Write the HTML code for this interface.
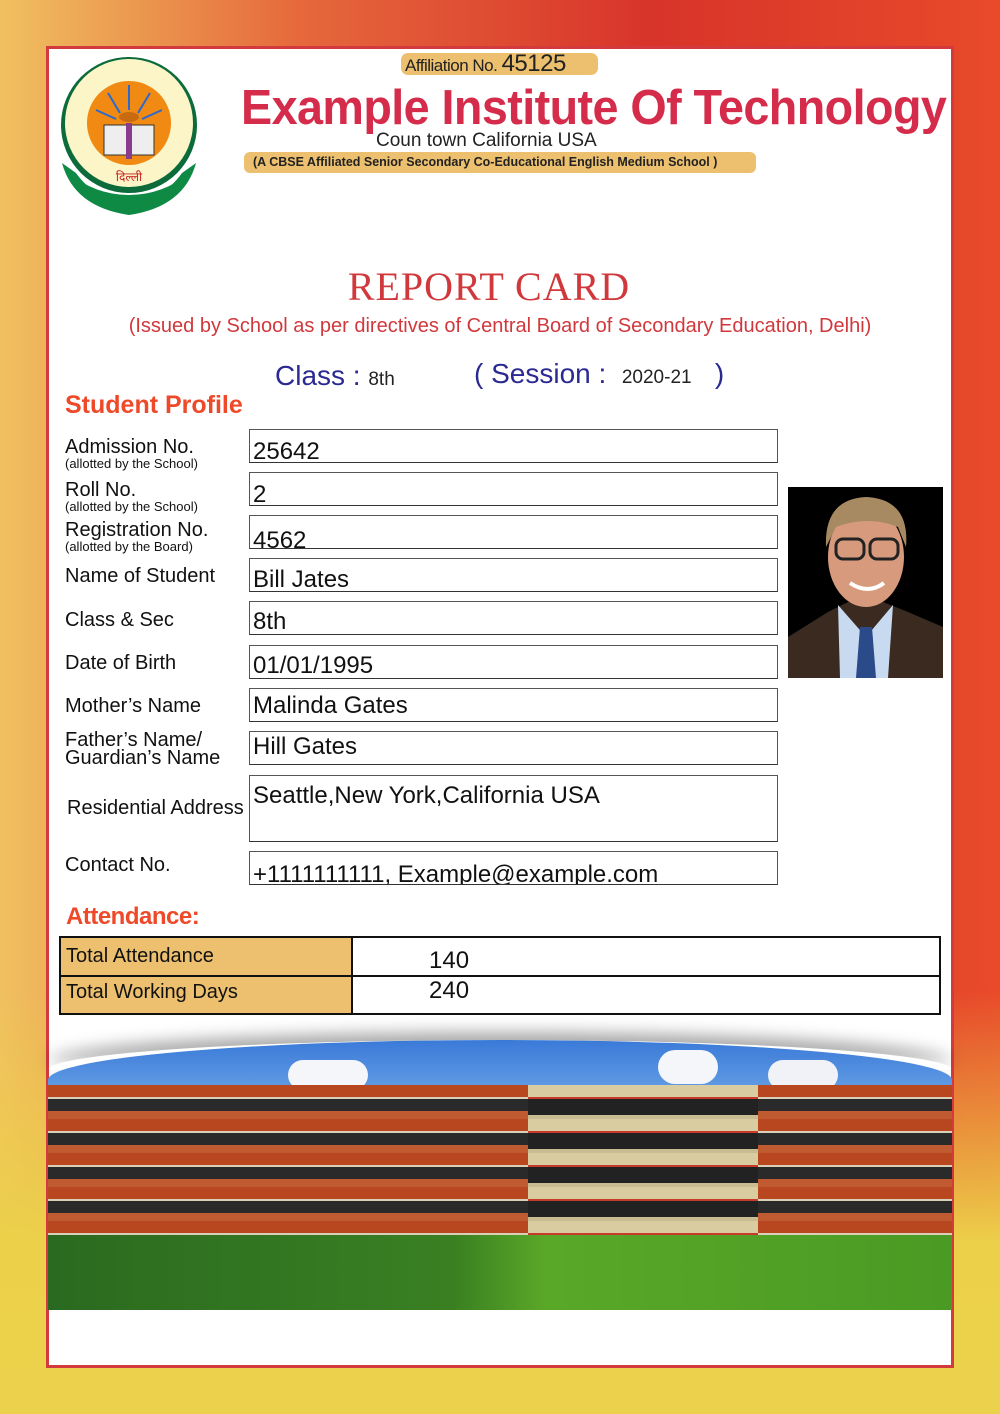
<!DOCTYPE html>
<html><head><meta charset="utf-8">
<style>
*{margin:0;padding:0;box-sizing:border-box}
body{width:1000px;height:1414px;position:relative;overflow:hidden;font-family:"Liberation Sans",sans-serif;
background:linear-gradient(180deg,rgba(0,0,0,0) 0%,rgba(0,0,0,0) 70%,rgba(236,208,74,1) 88%,#ecd24c 100%),
linear-gradient(90deg,#f0c060 0%,#e6683c 30%,#d8342a 65%,#e84a2a 100%);}
.a{position:absolute}
#card{left:46px;top:46px;width:908px;height:1322px;background:#fff;border:3px solid #d23a3e}
.lbl{position:absolute;left:65px;font-size:20px;color:#111}
.sm{font-size:13px;display:block;line-height:12px}
.box{position:absolute;left:249px;width:529px;height:34px;border:1px solid #555;border-bottom-color:#333;font-size:24px;color:#111;padding-left:3px;line-height:44px;overflow:hidden;white-space:nowrap}
</style></head><body>
<div id="card" class="a"></div>

<!-- emblem -->
<svg class="a" style="left:58px;top:55px" width="142" height="162" viewBox="0 0 142 162">
<path d="M4 108 Q16 152 71 160 Q126 152 138 108 L124 118 Q104 146 71 146 Q38 146 18 118Z" fill="#0e8a45"/>
<ellipse cx="71" cy="70" rx="68" ry="68" fill="#0b6b3a"/>
<ellipse cx="71" cy="68" rx="64" ry="64" fill="#fbf5c8"/>
<path d="M10 118 Q24 150 71 156 Q118 150 132 118 Q104 140 71 140 Q38 140 10 118Z" fill="#0e8a45"/>
<circle cx="71" cy="68" r="42" fill="#f08a12"/>
<g stroke="#2a6ad0" stroke-width="2">
<line x1="71" y1="30" x2="71" y2="55"/><line x1="50" y1="38" x2="62" y2="58"/><line x1="92" y1="38" x2="80" y2="58"/><line x1="38" y1="55" x2="58" y2="64"/><line x1="104" y1="55" x2="84" y2="64"/></g>
<ellipse cx="71" cy="62" rx="10" ry="5" fill="#c86a10"/>
<path d="M46 70 L96 70 L96 100 L46 100Z" fill="#eee" stroke="#333"/>
<rect x="68" y="68" width="6" height="36" fill="#8a3c8c"/>
<text x="71" y="126" font-size="12" text-anchor="middle" fill="#c82020" font-family="Noto Sans CJK SC,sans-serif">दिल्ली</text>
</svg>

<div class="a" style="left:401px;top:53px;width:197px;height:22px;background:#ecc06e;border-radius:7px;font-size:17px;line-height:22px;padding-left:4px;color:#222;letter-spacing:-0.5px">Affiliation No. <span style="font-size:24px">45125</span></div>
<div class="a" style="left:241px;top:80px;font-size:49px;font-weight:bold;color:#d42c4a;letter-spacing:-0.6px;white-space:nowrap;transform:scaleX(0.953);transform-origin:0 0">Example Institute Of Technology</div>
<div class="a" style="left:376px;top:130px;font-size:19px;color:#222">Coun town California USA</div>
<div class="a" style="left:244px;top:152px;width:512px;height:21px;background:#ecc06e;border-radius:6px;font-size:12.5px;font-weight:bold;line-height:21px;padding-left:9px;color:#222;white-space:nowrap">(A CBSE Affiliated Senior Secondary Co-Educational English Medium School )</div>

<div class="a" style="left:0;width:978px;top:263px;text-align:center;font-family:'Liberation Serif',serif;font-size:40px;color:#d0383c;letter-spacing:1px">REPORT CARD</div>
<div class="a" style="left:0;width:1000px;top:315px;text-align:center;font-size:20px;color:#d0383c">(Issued by School as per directives of Central Board of Secondary Education, Delhi)</div>

<div class="a" style="left:275px;top:360px;font-size:28px;color:#2a2a90">Class : <span style="font-size:19px;color:#222">8th</span></div>
<div class="a" style="left:474px;top:358px;font-size:28px;color:#2a2a90;white-space:nowrap">( Session : &nbsp;<span style="font-size:19px;color:#222">2020-21</span> &nbsp;&nbsp;)</div>

<div class="a" style="left:65px;top:391px;font-size:25px;font-weight:bold;color:#ee4a2a">Student Profile</div>

<div class="lbl" style="top:436px;line-height:22px">Admission No.<span class="sm">(allotted by the School)</span></div>
<div class="lbl" style="top:479px;line-height:22px">Roll No.<span class="sm">(allotted by the School)</span></div>
<div class="lbl" style="top:519px;line-height:22px">Registration No.<span class="sm">(allotted by the Board)</span></div>
<div class="lbl" style="top:565px">Name of Student</div>
<div class="lbl" style="top:609px">Class &amp; Sec</div>
<div class="lbl" style="top:652px">Date of Birth</div>
<div class="lbl" style="top:695px">Mother’s Name</div>
<div class="lbl" style="top:731px;line-height:18px">Father’s Name/<br>Guardian’s Name</div>
<div class="lbl" style="top:797px;left:67px">Residential Address</div>
<div class="lbl" style="top:854px">Contact No.</div>

<div class="box" style="top:429px">25642</div>
<div class="box" style="top:472px;line-height:44px">2</div>
<div class="box" style="top:515px;line-height:50px">4562</div>
<div class="box" style="top:558px;line-height:42px">Bill Jates</div>
<div class="box" style="top:601px;line-height:40px">8th</div>
<div class="box" style="top:645px;line-height:40px">01/01/1995</div>
<div class="box" style="top:688px;line-height:34px">Malinda Gates</div>
<div class="box" style="top:731px;line-height:30px">Hill Gates</div>
<div class="box" style="top:775px;height:67px;line-height:40px">Seattle,New York,California USA</div>
<div class="box" style="top:851px;line-height:46px">+1111111111, Example@example.com</div>

<!-- photo -->
<svg class="a" style="left:788px;top:487px" width="155" height="191" viewBox="0 0 155 191">
<rect width="155" height="191" fill="#000"/>
<path d="M0 150 L40 125 L60 115 L95 115 L120 125 L155 140 L155 191 L0 191Z" fill="#3a2a20"/>
<path d="M50 118 L78 150 L105 118 L100 191 L52 191Z" fill="#c8daf0"/>
<path d="M72 140 L84 140 L88 191 L68 191Z" fill="#2a4a8a"/>
<ellipse cx="78" cy="70" rx="38" ry="50" fill="#d89a7c"/>
<path d="M38 60 Q36 12 78 10 Q122 12 118 60 L110 40 Q80 28 48 40Z" fill="#a88a62"/>
<g fill="none" stroke="#222" stroke-width="3"><rect x="48" y="52" width="28" height="20" rx="7"/><rect x="82" y="52" width="28" height="20" rx="7"/></g>
<path d="M62 96 Q80 108 96 96" stroke="#fff" stroke-width="4" fill="none"/>
</svg>

<div class="a" style="left:66px;top:903px;font-size:24px;font-weight:bold;color:#ee4a2a;letter-spacing:-0.5px">Attendance:</div>
<div class="a" style="left:59px;top:936px;width:882px;height:79px;border:2px solid #111;background:#fff"></div>
<div class="a" style="left:61px;top:938px;width:292px;height:75px;background:#ecc06e;border-right:2px solid #111"></div>
<div class="a" style="left:61px;top:975px;width:878px;height:2px;background:#111"></div>
<div class="a" style="left:66px;top:945px;font-size:20px;color:#111">Total Attendance</div>
<div class="a" style="left:66px;top:981px;font-size:20px;color:#111">Total Working Days</div>
<div class="a" style="left:429px;top:947px;font-size:24px;color:#111">140</div>
<div class="a" style="left:429px;top:977px;font-size:24px;color:#111">240</div>

<!-- building picture -->
<div class="a" style="left:48px;top:1040px;width:904px;height:30px;border-radius:50% 50% 0 0/100% 100% 0 0;box-shadow:0 -8px 16px rgba(0,0,0,0.35)"></div>
<div class="a" style="left:48px;top:1040px;width:904px;height:270px;overflow:hidden;border-radius:50% 50% 0 0/40px 40px 0 0">
<div class="a" style="left:0;top:0;width:904px;height:80px;background:linear-gradient(180deg,#3a7ad8,#7ab0ec)"></div>
<div class="a" style="left:240px;top:20px;width:80px;height:30px;border-radius:20px;background:#f4f6fa"></div>
<div class="a" style="left:610px;top:10px;width:60px;height:34px;border-radius:20px;background:#f4f6fa"></div>
<div class="a" style="left:720px;top:20px;width:70px;height:30px;border-radius:20px;background:#f0f2f8"></div>
<div class="a" style="left:0;top:45px;width:904px;height:195px;background:repeating-linear-gradient(180deg,#b8461e 0 12px,#d8d0b8 12px 14px,#2a2a2a 14px 26px,#c05a30 26px 34px)"></div>
<div class="a" style="left:480px;top:45px;width:230px;height:195px;background:repeating-linear-gradient(180deg,#d8cca0 0 12px,#c83a2a 12px 14px,#222 14px 30px,#c8bc90 30px 34px)"></div>
<div class="a" style="left:0;top:195px;width:904px;height:75px;background:linear-gradient(90deg,#2a6a20 0%,#3a8022 45%,#5aa828 55%,#4a9a24 100%)"></div>
</div>
</body></html>
